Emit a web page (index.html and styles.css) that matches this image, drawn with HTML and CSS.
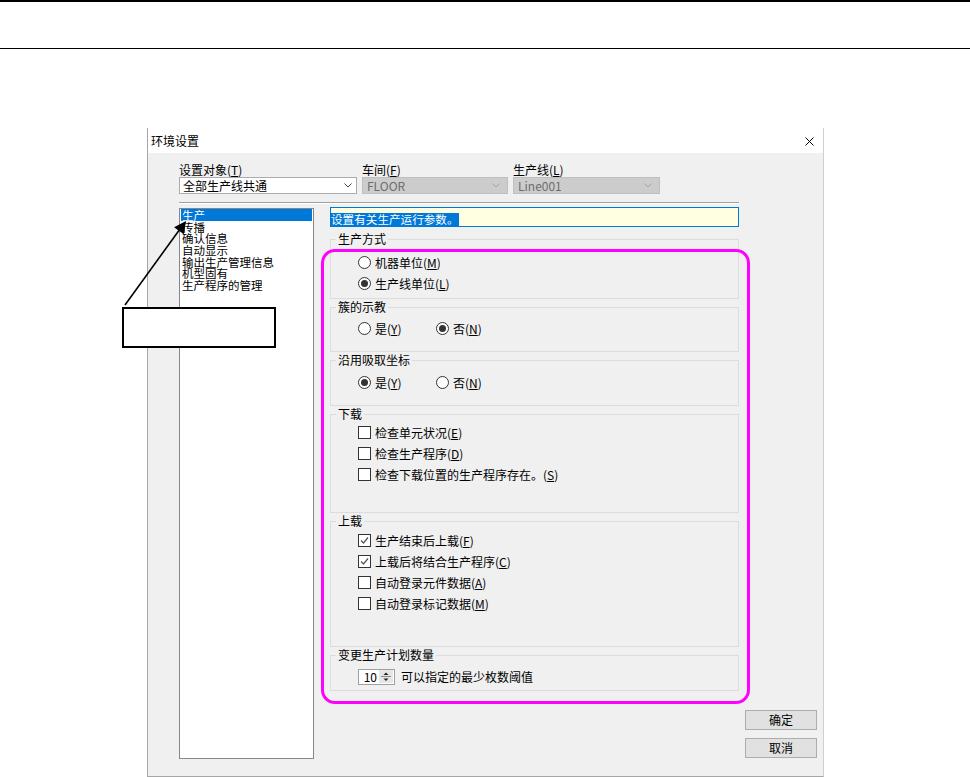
FILE: index.html
```html
<!DOCTYPE html>
<html lang="zh-CN">
<head>
    <meta charset="UTF-8">
    <title>环境设置</title>
    <link rel="stylesheet" href="styles.css">
</head>
<body>
    <div class="doc-rule"></div>

    <div class="dialog">
        <div class="titlebar">
            <span class="title">环境设置</span>
            <svg class="close-btn" viewBox="0 0 9 9"><path d="M0.5 0.5L8.5 8.5M8.5 0.5L0.5 8.5" stroke="#000" stroke-width="1"/></svg>
        </div>

        <div class="dialog-body">
            <div class="target-row">
                <div class="field f-target">
                    <label>设置对象(<u>T</u>)</label>
                    <div class="combo">全部生产线共通<svg viewBox="0 0 8 5"><path d="M0.5 0.5L4 4L7.5 0.5" fill="none" stroke="#444"/></svg></div>
                </div>
                <div class="field f-floor">
                    <label>车间(<u>F</u>)</label>
                    <div class="combo disabled">FLOOR<svg viewBox="0 0 8 5"><path d="M0.5 0.5L4 4L7.5 0.5" fill="none" stroke="#a8a8a8"/></svg></div>
                </div>
                <div class="field f-line">
                    <label>生产线(<u>L</u>)</label>
                    <div class="combo disabled">Line001<svg viewBox="0 0 8 5"><path d="M0.5 0.5L4 4L7.5 0.5" fill="none" stroke="#a8a8a8"/></svg></div>
                </div>
            </div>

            <div class="sep"></div>

            <div class="main">
                <ul class="nav-list">
                    <li class="active">生产</li>
                    <li>传播</li>
                    <li>确认信息</li>
                    <li>自动显示</li>
                    <li>输出生产管理信息</li>
                    <li>机型固有</li>
                    <li>生产程序的管理</li>
                </ul>

                <div class="settings">
                    <div class="desc"><span class="sel">设置有关生产运行参数。</span></div>

                    <fieldset class="group g-method">
                        <legend>生产方式</legend>
                        <div class="group-body">
                            <div class="opt-row"><span class="opt"><span class="radio-mark"></span>机器单位(<u>M</u>)</span></div>
                            <div class="opt-row"><span class="opt"><span class="radio-mark on"></span>生产线单位(<u>L</u>)</span></div>
                        </div>
                    </fieldset>

                    <fieldset class="group g-teach">
                        <legend>簇的示教</legend>
                        <div class="group-body">
                            <div class="opt-row">
                                <span class="opt"><span class="radio-mark"></span>是(<u>Y</u>)</span>
                                <span class="opt"><span class="radio-mark on"></span>否(<u>N</u>)</span>
                            </div>
                        </div>
                    </fieldset>

                    <fieldset class="group g-pick">
                        <legend>沿用吸取坐标</legend>
                        <div class="group-body">
                            <div class="opt-row">
                                <span class="opt"><span class="radio-mark on"></span>是(<u>Y</u>)</span>
                                <span class="opt"><span class="radio-mark"></span>否(<u>N</u>)</span>
                            </div>
                        </div>
                    </fieldset>

                    <fieldset class="group g-down">
                        <legend>下载</legend>
                        <div class="group-body">
                            <div class="opt-row"><span class="check-mark"></span>检查单元状况(<u>E</u>)</div>
                            <div class="opt-row"><span class="check-mark"></span>检查生产程序(<u>D</u>)</div>
                            <div class="opt-row"><span class="check-mark"></span>检查下载位置的生产程序存在。(<u>S</u>)</div>
                        </div>
                    </fieldset>

                    <fieldset class="group g-up">
                        <legend>上载</legend>
                        <div class="group-body">
                            <div class="opt-row"><span class="check-mark"><svg viewBox="0 0 11 11"><path d="M2 5.5L4.5 8L9 2.5" fill="none" stroke="#555" stroke-width="1.2"/></svg></span>生产结束后上载(<u>F</u>)</div>
                            <div class="opt-row"><span class="check-mark"><svg viewBox="0 0 11 11"><path d="M2 5.5L4.5 8L9 2.5" fill="none" stroke="#555" stroke-width="1.2"/></svg></span>上载后将结合生产程序(<u>C</u>)</div>
                            <div class="opt-row"><span class="check-mark"></span>自动登录元件数据(<u>A</u>)</div>
                            <div class="opt-row"><span class="check-mark"></span>自动登录标记数据(<u>M</u>)</div>
                        </div>
                    </fieldset>

                    <fieldset class="group g-plan">
                        <legend>变更生产计划数量</legend>
                        <div class="group-body">
                            <div class="opt-row">
                                <span class="spin">
                                    <span class="spin-val">10</span>
                                    <span class="spin-btns">
                                        <svg viewBox="0 0 14 13"><rect x="0" y="0" width="14" height="13" fill="#e6e6e6"/><path d="M4.5 5L7 2.5L9.5 5Z" fill="#222"/><path d="M2 6.5H12" stroke="#888"/><path d="M4.5 8.5L7 11L9.5 8.5Z" fill="#222"/></svg>
                                    </span>
                                </span>
                                <span class="spin-label">可以指定的最少枚数阈值</span>
                            </div>
                        </div>
                    </fieldset>

                    <div class="mark-frame"></div>
                </div>

                <div class="buttons">
                    <button class="btn">确定</button>
                    <button class="btn">取消</button>
                </div>
            </div>
        </div>
    </div>

    <div class="callout"></div>
    <svg class="callout-arrow" viewBox="0 0 90 110">
        <path d="M15 95L70 19" stroke="#000" stroke-width="1.6"/>
        <path d="M76 11L73.8 24.2L64.1 17.2Z" fill="#000"/>
    </svg>
</body>
</html>
```

FILE: styles.css
```css
* {
    box-sizing: border-box;
}

body {
    margin: 0;
    position: relative;
    height: 777px;
    overflow: hidden;
    background: #fff;
    color: #000;
    font-family: "Noto Sans CJK SC", "Liberation Sans", sans-serif;
    font-size: 12px;
}

u {
    text-decoration: underline;
    text-underline-offset: 1px;
}

.doc-rule {
    height: 49px;
    border-top: 2px solid #000;
    border-bottom: 1px solid #000;
}

/* dialog window */
.dialog {
    width: 677px;
    margin: 79px 0 0 147px;
    border: 1px solid #a6a6a6;
    border-top: 0;
    border-right-color: #cfcfcf;
    background: #f0f0f0;
}

.titlebar {
    height: 25px;
    display: flex;
    align-items: center;
    padding: 1px 9px 0 3px;
    background: #fff;
}

.titlebar .title {
    line-height: 14px;
}

.close-btn {
    width: 9px;
    height: 9px;
    margin-left: auto;
}

.dialog-body {
    height: 623px;
    padding: 9px 0 0 31px;
}

.target-row {
    display: flex;
    gap: 5px;
}

.field label {
    display: block;
    height: 15px;
    line-height: 15px;
}

.f-target { width: 178px; }
.f-floor { width: 146px; }
.f-line { width: 147px; }

.combo {
    height: 17px;
    display: flex;
    align-items: center;
    padding-left: 3px;
    border: 1px solid #acacac;
    background: #fff;
    line-height: 15px;
}

.combo svg {
    width: 8px;
    height: 5px;
    margin-left: auto;
    margin-right: 4px;
}

.combo.disabled {
    padding-left: 4px;
    border-color: #bfbfbf;
    background: #cccccc;
    color: #6d6d6d;
}

.combo.disabled svg {
    margin-right: 7px;
}

.sep {
    width: 560px;
    height: 2px;
    margin-top: 8px;
    border-top: 1px solid #a0a0a0;
    border-bottom: 1px solid #fff;
}

.main {
    display: flex;
    margin-top: 3px;
}

/* category list */
.nav-list {
    width: 135px;
    height: 551px;
    margin: 1px 16px 0 0;
    padding: 0 1px;
    list-style: none;
    border: 1px solid #828790;
    background: #fff;
}

.nav-list li {
    height: 11.7px;
    padding-left: 1px;
    font-size: 11.5px;
    line-height: 12px;
    white-space: nowrap;
}

.nav-list li.active {
    height: 12px;
    margin-bottom: -0.3px;
    background: #0078d7;
    color: #fff;
}

/* settings panel */
.settings {
    width: 409px;
    flex: none;
    position: relative;
}

.desc {
    height: 20px;
    padding-top: 2px;
    border: 1px solid #0078d7;
    background: #ffffe1;
}

.desc .sel {
    display: inline-block;
    height: 13px;
    line-height: 13px;
    background: #0078d7;
    color: #fff;
    font-size: 11.6px;
}

.group {
    margin: 2px 0 0;
    padding: 0;
    min-width: 0;
    border: 1px solid #dcdcdc;
}

.group legend {
    margin-left: 5px;
    padding: 0 2px;
    line-height: 12px;
}

.group-body {
    padding-left: 27px;
}

.g-method { margin-top: 6px; }
.g-method .group-body { height: 53px; padding-top: 7px; }
.g-teach .group-body { height: 38px; padding-top: 5px; }
.g-pick .group-body { height: 39px; padding-top: 6px; }
.g-down .group-body { height: 92px; padding-top: 2px; }
.g-up .group-body { height: 119px; padding-top: 3px; }
.g-plan .group-body { height: 29px; padding-top: 5px; }

.opt-row {
    height: 21px;
    display: flex;
    align-items: center;
    line-height: 14px;
    white-space: nowrap;
}

.opt {
    min-width: 78px;
    display: flex;
    align-items: center;
}

.radio-mark {
    width: 13px;
    height: 13px;
    flex: none;
    margin-right: 4px;
    display: flex;
    align-items: center;
    justify-content: center;
    border: 1px solid #333;
    border-radius: 50%;
    background: #fff;
}

.radio-mark.on::after {
    content: "";
    width: 7px;
    height: 7px;
    border-radius: 50%;
    background: #333;
}

.check-mark {
    width: 13px;
    height: 13px;
    margin-right: 4px;
    flex: none;
    border: 1px solid #333;
    background: #fff;
}

.check-mark svg {
    display: block;
    width: 11px;
    height: 11px;
}

.spin {
    width: 37px;
    height: 16px;
    flex: none;
    display: flex;
    border: 1px solid #a0a0a0;
    background: #fff;
}

.spin-val {
    flex: 1;
    padding-right: 2px;
    text-align: right;
    line-height: 14px;
}

.spin-btns svg {
    display: block;
    width: 14px;
    height: 13px;
    margin: 0 1px 0 0;
}

.spin-label {
    margin-left: 6px;
}

/* annotation frame */
.mark-frame {
    position: absolute;
    left: -9px;
    top: 42px;
    width: 429px;
    height: 455px;
    border: 3px solid #ff00ff;
    border-radius: 14px;
}

.buttons {
    align-self: flex-end;
    display: flex;
    flex-direction: column;
    gap: 8px;
    margin: 0 0 1px 6px;
}

.btn {
    width: 72px;
    height: 20px;
    padding: 0;
    border: 1px solid #adadad;
    background: #e1e1e1;
    color: #000;
    font: inherit;
    line-height: 18px;
}

/* callout over the page */
.callout {
    position: absolute;
    left: 122px;
    top: 307px;
    width: 154px;
    height: 41px;
    border: 2px solid #000;
    background: #fff;
}

.callout-arrow {
    position: absolute;
    left: 110px;
    top: 210px;
    width: 90px;
    height: 110px;
}
```
